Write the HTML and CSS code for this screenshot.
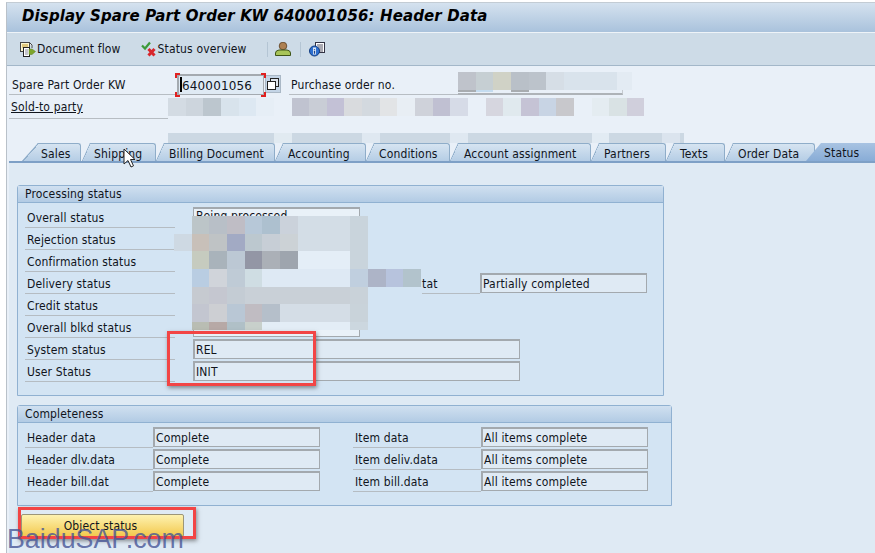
FILE: index.html
```html
<!DOCTYPE html>
<html lang="en">
<head>
<meta charset="utf-8">
<title>Display Spare Part Order</title>
<link rel="stylesheet" href="styles.css">
</head>
<body>
<div class="window">
  <h1 class="title">Display Spare Part Order KW 640001056: Header Data</h1>
  <div class="toolbar">
    <span class="tool">
      <svg class="ico" viewBox="0 0 17 15"><rect x="1.500" y=".5" width="9" height="9" fill="#fbf6cf" stroke="#444"/><path d="M3 3h6M3 5h6" stroke="#c49a2c"/><path d="M10.500 .5l2.500 2.500v3" fill="#fff" stroke="#444"/><rect x="4.500" y="5.500" width="6" height="9" fill="#fff" stroke="#222"/><path d="M6 8h3M6 10h3M6 12h3" stroke="#889"/><path d="M10 7h3l3.500 2.500-3.500 3h-3z" fill="#7da62c" stroke="#5c7d1c" stroke-width=".5"/></svg>
      Document flow
    </span>
    <span class="tool tool-status">
      <svg class="ico" viewBox="0 0 16 16"><path d="M1 4.500l3 3 5-6" fill="none" stroke="#3d9a3a" stroke-width="2.200"/><path d="M7.500 8l6 6.500M13.500 8l-6 6.500" stroke="#d8262c" stroke-width="3"/></svg>
      Status overview
    </span>
    <span class="sep"></span>
    <svg class="ico ico-user" viewBox="0 0 16 14"><circle cx="8" cy="4" r="3.800" fill="#ad8052" stroke="#5a3f22" stroke-width=".8"/><path d="M.5 13.500v-2.500q0-2.500 3.500-3h8q3.500 .500 3.500 3v2.500z" fill="#a8c458" stroke="#3f5518"/></svg>
    <span class="sep sep-b"></span>
    <svg class="ico ico-info" viewBox="0 0 16 15"><rect x="6.500" y=".5" width="9" height="10" fill="#fff" stroke="#334"/><path d="M8 3h6M9 5h5M9 7h5M9 9h5" stroke="#556"/><circle cx="5.500" cy="9" r="5" fill="#2c6fd0" stroke="#123c80"/><path d="M4 5.500h3v7H4z" fill="#dfeaf6"/><path d="M5.500 7v.8M5.500 8.800v3" stroke="#173f8a" stroke-width="1.300"/></svg>
  </div>

  <div class="head">
    <div class="head-row">
      <label class="lbl lbl-order">Spare Part Order KW</label>
      <span class="order-field"><span class="caret"></span>640001056</span>
      <span class="copy-btn"><svg viewBox="0 0 12 12" class="copy-ico"><rect x="3.500" y=".5" width="8" height="8" fill="#dfe6ee" stroke="#222"/><rect x=".5" y="3.500" width="8" height="8" fill="#fff" stroke="#222"/></svg></span>
      <label class="lbl lbl-po">Purchase order no.</label>
      <span class="po-field"></span>
    </div>
    <div class="head-row head-row-2">
      <label class="lbl lbl-sold"><u>Sold-to party</u></label>
    </div>
  </div>

  <div class="tabs">
    <span class="tab tab-first">Sales</span>
    <span class="tab t-ship">Shipping</span>
    <span class="tab t-bill">Billing Document</span>
    <span class="tab t-acc">Accounting</span>
    <span class="tab t-cond">Conditions</span>
    <span class="tab t-assign">Account assignment</span>
    <span class="tab t-part">Partners</span>
    <span class="tab t-text">Texts</span>
    <span class="tab t-order">Order Data</span>
    <span class="tab tab-active">Status</span>
  </div>

  <div class="panel">
    <section class="group group-proc">
      <h2 class="group-title">Processing status</h2>
      <div class="proc-grid">
        <span class="cap">Overall status</span>
        <span class="cap">Rejection status</span>
        <span class="cap">Confirmation status</span>
        <span class="cap">Delivery status</span>
        <span class="cap">Credit status</span>
        <span class="cap">Overall blkd status</span>
        <span class="cap cap-wide">System status</span>
        <span class="cap cap-wide">User Status</span>
        <div class="multi">Being processed</div>
        <span class="val val-long r7">REL</span>
        <span class="val val-long r8">INIT</span>
        <span class="cap cap-tat">tat</span>
        <span class="val val-part">Partially completed</span>
      </div>
    </section>

    <section class="group group-comp">
      <h2 class="group-title">Completeness</h2>
      <div class="comp-grid">
        <span class="cap">Header data</span><span class="val">Complete</span><span class="cap">Item data</span><span class="val">All items complete</span>
        <span class="cap">Header dlv.data</span><span class="val">Complete</span><span class="cap">Item deliv.data</span><span class="val">All items complete</span>
        <span class="cap">Header bill.dat</span><span class="val">Complete</span><span class="cap">Item bill.data</span><span class="val">All items complete</span>
      </div>
    </section>

    <button class="obj-btn" type="button">Object status</button>
  </div>

  <svg class="mosaic" width="875" height="553" viewBox="0 0 875 553">
    <g>
      <rect x="168" y="98" width="18" height="18" fill="#d3dbe3"/><rect x="186" y="98" width="17" height="18" fill="#cdd5dd"/><rect x="203" y="98" width="18" height="18" fill="#bcc6ce"/><rect x="221" y="98" width="18" height="18" fill="#d8e3ec"/><rect x="239" y="98" width="17" height="18" fill="#dde8f2"/><rect x="256" y="98" width="18" height="18" fill="#e6eef6"/>
      <rect x="292" y="98" width="17" height="18" fill="#c0c3d0"/><rect x="309" y="98" width="18" height="18" fill="#c9cdd6"/><rect x="327" y="98" width="17" height="18" fill="#c3c1d6"/><rect x="344" y="98" width="18" height="18" fill="#d9dbde"/><rect x="362" y="98" width="18" height="18" fill="#d3d9df"/><rect x="380" y="98" width="17" height="18" fill="#e2e4e6"/><rect x="397" y="98" width="18" height="18" fill="#e8eef4"/><rect x="415" y="98" width="18" height="18" fill="#cfd2da"/><rect x="433" y="98" width="17" height="18" fill="#c0c0d2"/><rect x="450" y="98" width="18" height="18" fill="#d6dbe7"/>
      <rect x="486" y="98" width="17" height="18" fill="#d6d6df"/><rect x="503" y="98" width="18" height="18" fill="#e0e9ee"/><rect x="521" y="98" width="18" height="18" fill="#c5c3d5"/><rect x="539" y="98" width="17" height="18" fill="#c8d4e4"/><rect x="556" y="98" width="18" height="18" fill="#c8c8cc"/><rect x="592" y="98" width="17" height="18" fill="#e4ecf1"/><rect x="609" y="98" width="18" height="18" fill="#d9e2e4"/><rect x="627" y="98" width="17" height="18" fill="#d0cfdc"/>
    </g>
    <g>
      <rect x="168" y="133" width="106" height="10" fill="#ccd8e3"/><rect x="274" y="133" width="18" height="10" fill="#e1eaf1"/><rect x="292" y="133" width="70" height="10" fill="#ccd8e3"/><rect x="362" y="133" width="18" height="10" fill="#dfe8f1"/><rect x="380" y="133" width="70" height="10" fill="#ccd8e3"/><rect x="450" y="133" width="18" height="10" fill="#dfe8f1"/><rect x="468" y="133" width="124" height="10" fill="#ccd8e3"/><rect x="592" y="133" width="17" height="10" fill="#e2ebf3"/><rect x="609" y="133" width="53" height="10" fill="#ccd8e3"/><rect x="662" y="133" width="18" height="10" fill="#dbe4ee"/><rect x="680" y="133" width="4" height="10" fill="#ccd8e3"/>
    </g>
    <g>
      <rect x="458" y="72" width="18" height="18" fill="#bfc3cb"/><rect x="476" y="72" width="17" height="18" fill="#c6cfd3"/><rect x="493" y="72" width="18" height="18" fill="#d0d2c6"/><rect x="511" y="72" width="18" height="18" fill="#b9c0c8"/><rect x="529" y="72" width="17" height="18" fill="#bcc3cb"/><rect x="546" y="72" width="18" height="18" fill="#d6dee6"/><rect x="564" y="72" width="53" height="18" fill="#d9e3ec"/><rect x="617" y="72" width="15" height="18" fill="#e3ebf3"/>
      <rect x="458" y="90" width="18" height="2" fill="#a8acb0"/><rect x="476" y="90" width="17" height="2" fill="#c4dcf0"/><rect x="511" y="90" width="18" height="2" fill="#a8acb0"/>
    </g>
    <g>
      <rect x="192" y="216" width="17" height="18" fill="#bcc5c8"/><rect x="209" y="216" width="18" height="18" fill="#b8bfc7"/><rect x="227" y="216" width="18" height="18" fill="#bfbdc5"/><rect x="245" y="216" width="17" height="18" fill="#b7c8d8"/><rect x="262" y="216" width="18" height="18" fill="#adc0cf"/><rect x="280" y="216" width="18" height="18" fill="#cbd2db"/><rect x="298" y="216" width="52" height="18" fill="#d3dde6"/><rect x="350" y="216" width="18" height="18" fill="#c9d4dc"/>
      <rect x="174" y="234" width="18" height="17" fill="#ced9e3"/><rect x="192" y="234" width="17" height="17" fill="#c8c0b9"/><rect x="209" y="234" width="18" height="17" fill="#bfc3c5"/><rect x="227" y="234" width="18" height="17" fill="#a2aac4"/><rect x="245" y="234" width="17" height="17" fill="#bcc8cf"/><rect x="262" y="234" width="18" height="17" fill="#c7ced6"/><rect x="280" y="234" width="18" height="17" fill="#ccd2d6"/><rect x="298" y="234" width="52" height="17" fill="#d3dde6"/><rect x="350" y="234" width="18" height="17" fill="#c9d4dc"/>
      <rect x="192" y="251" width="17" height="18" fill="#c6cbbf"/><rect x="209" y="251" width="18" height="18" fill="#a9b3bb"/><rect x="227" y="251" width="18" height="18" fill="#bcc8d4"/><rect x="245" y="251" width="17" height="18" fill="#9396a5"/><rect x="262" y="251" width="18" height="18" fill="#abb0b7"/><rect x="280" y="251" width="18" height="18" fill="#9ea5ae"/><rect x="298" y="251" width="52" height="18" fill="#e4eef7"/><rect x="350" y="251" width="18" height="18" fill="#c9d4dc"/>
      <rect x="192" y="269" width="17" height="18" fill="#b9cde2"/><rect x="209" y="269" width="18" height="18" fill="#d0d4da"/><rect x="227" y="269" width="18" height="18" fill="#bfcbd6"/><rect x="245" y="269" width="17" height="18" fill="#cfdde3"/><rect x="262" y="269" width="88" height="18" fill="#dee9f4"/><rect x="350" y="269" width="18" height="18" fill="#c0cfdf"/><rect x="368" y="269" width="18" height="18" fill="#adb4c7"/><rect x="386" y="269" width="17" height="18" fill="#b7c3dd"/><rect x="403" y="269" width="18" height="18" fill="#b2c3cc"/>
      <rect x="192" y="287" width="17" height="17" fill="#c6cad0"/><rect x="209" y="287" width="18" height="17" fill="#c5c7d0"/><rect x="227" y="287" width="18" height="17" fill="#c4ccd4"/><rect x="245" y="287" width="105" height="17" fill="#c9d0d7"/><rect x="350" y="287" width="18" height="17" fill="#c9d2d9"/>
      <rect x="192" y="304" width="17" height="18" fill="#c3c6d0"/><rect x="209" y="304" width="18" height="18" fill="#cdcfd3"/><rect x="227" y="304" width="18" height="18" fill="#b9c7d5"/><rect x="245" y="304" width="17" height="18" fill="#c0bcc2"/><rect x="262" y="304" width="18" height="18" fill="#b5bfca"/><rect x="280" y="304" width="70" height="18" fill="#d4dde6"/><rect x="350" y="304" width="18" height="18" fill="#c9d3da"/>
      <rect x="192" y="322" width="17" height="8" fill="#b9bdb3"/><rect x="209" y="322" width="18" height="8" fill="#b7a9a6"/><rect x="227" y="322" width="18" height="8" fill="#b0c0c7"/><rect x="245" y="322" width="17" height="8" fill="#c8d0cb"/><rect x="262" y="322" width="88" height="8" fill="#e3edf6"/><rect x="350" y="322" width="18" height="8" fill="#ccd7df"/>
    </g>
  </svg>

  <span class="corner c-tl"></span><span class="corner c-tr"></span><span class="corner c-bl"></span><span class="corner c-br"></span>
  <div class="mark mark-status"></div>
  <div class="mark mark-btn"></div>
  <div class="watermark">BaiduSAP.com</div>
  <svg class="cursor" viewBox="0 0 13 20" width="13" height="20"><path d="M1 1v15l4-3.500 3 6.500 2.500-1.200-3-6.300H12z" fill="#fff" stroke="#222"/></svg>
</div>
</body>
</html>
```

FILE: styles.css
```css
* { box-sizing: border-box; }
html, body { margin: 0; padding: 0; }
body {
  width: 875px;
  height: 553px;
  overflow: hidden;
  background: #fff;
  font-family: "DejaVu Sans Condensed", "DejaVu Sans", sans-serif;
  font-stretch: condensed;
  font-size: 12px;
  letter-spacing: .15px;
  color: #10141c;
}
.window {
  position: relative;
  margin-left: 6px;
  margin-top: 2px;
  width: 869px;
  height: 551px;
  background: #e9f0f8;
  border-left: 1px solid #b9c1c9;
  border-top: 1px solid #c3ccd4;
  overflow: hidden;
}
.title {
  margin: 0;
  height: 30px;
  padding: 0 0 0 15px;
  line-height: 26px;
  font-family: "DejaVu Sans", sans-serif;
  font-stretch: normal;
  font-size: 15px;
  font-weight: bold;
  font-style: italic;
  letter-spacing: .12px;
  color: #000;
  background: linear-gradient(#d5e2ef, #a9c2dc);
  border-bottom: 1px solid #eef3f8;
}
.toolbar {
  display: flex;
  align-items: center;
  height: 33px;
  padding: 0 0 0 12px;
  background: #cddbe7;
  border-bottom: 1px solid #a3b7c9;
}
.tool { display: flex; align-items: center; gap: 1px; }
.tool-status { margin-left: 20px; }
.ico { width: 17px; height: 15px; flex: none; }
.tool-status .ico { width: 16px; height: 16px; }
.sep { width: 1px; height: 15px; background: #b4c5d4; margin-left: 20px; }
.sep-b { margin-left: 9px; }
.ico-user { width: 16px; height: 14px; margin-left: 7px; }
.ico-info { width: 16px; height: 15px; margin-left: 8px; }

.head { height: 77px; padding-top: 7px; }
.head-row { display: flex; align-items: flex-start; height: 24px; }
.head-row-2 { height: 22px; }
.lbl {
  display: block;
  height: 22px;
  line-height: 24px;
  border-bottom: 1px solid #b7bdc3;
  color: #10141c;
}
.lbl-order { width: 166px; margin-left: 2px; padding-left: 3px; }
.lbl-po { width: 169px; margin-left: 8px; padding-left: 2px; }
.lbl-sold { width: 159px; margin-left: 2px; padding-left: 2px; line-height: 21px; }
.order-field {
  position: relative;
  width: 87px;
  height: 21px;
  margin-left: 2px;
  margin-top: 1px;
  padding-left: 3px;
  line-height: 20px;
  font-family: "DejaVu Sans", sans-serif;
  font-stretch: normal;
  font-size: 12px;
  background: #dfeaf4;
  border: 1px solid #a4aab0;
  border-width: 2px 1px 1px 2px;
}
.caret { position: absolute; left: 1px; top: 1px; width: 2px; height: 15px; background: #000; }
.copy-btn {
  display: flex;
  align-items: center;
  justify-content: center;
  width: 16px;
  height: 18px;
  margin-left: 1px;
  margin-top: 2px;
  background: #c3d4e6;
  border: 1px solid #aab8c6;
}
.copy-ico { width: 12px; height: 12px; }
.po-field {
  width: 165px;
  height: 22px;
  background: #e9f0f8;
  border-bottom: 2px solid #aeb3b8;
  border-right: 1px solid #c5cad0;
}

.tabs { display: flex; height: 18px; padding-left: 15px; }
.tab {
  position: relative;
  display: block;
  height: 18px;
  padding-left: 13px;
  line-height: 20px;
  white-space: nowrap;
  background: linear-gradient(#d6e4f1, #b5cde5);
  border-top: 1px solid #8fadc9;
  border-right: 1px solid #8fadc9;
  border-radius: 0 3px 0 0;
  clip-path: polygon(8px 0, 100% 0, 100% 100%, 0 100%);
}
.tab::before {
  content: "";
  position: absolute;
  left: 0;
  top: -1px;
  width: 8px;
  height: 18px;
  background: linear-gradient(to bottom right, transparent 45%, #8fadc9 45%, #8fadc9 55%, transparent 55%);
}
.tab-first { width: 59px; padding-left: 19px; clip-path: polygon(16px 0, 100% 0, 100% 100%, 0 100%); }
.tab-first::before { width: 16px; }
.t-ship { width: 74px; margin-left: 1px; padding-left: 12px; }
.t-bill { width: 119px; }
.t-acc { width: 91px; }
.t-cond { width: 84px; }
.t-assign { width: 141px; padding-left: 14px; }
.t-part { width: 75px; }
.t-text { width: 59px; padding-left: 14px; }
.t-order { width: 90px; padding-left: 13px; }
.tab-active {
  width: 69px;
  margin-left: -9px;
  padding-left: 18px;
  border: 0;
  border-radius: 0;
  background: linear-gradient(#a8c3e2, #88acd6);
  clip-path: polygon(15px 0, 100% 0, 100% 100%, 0 100%);
}
.tab-active::before { display: none; }

.panel {
  height: 400px;
  margin-left: 2px;
  padding: 22px 0 0 8px;
  background: #dfeaf4;
  border-top: 2px solid #7ea0c6;
}
.group {
  background: #d3e4f3;
  border: 1px solid #90b1d1;
  border-radius: 3px 3px 0 0;
}
.group-proc { width: 647px; height: 211px; }
.group-comp { width: 655px; height: 101px; margin-top: 9px; }
.group-title {
  margin: 0;
  height: 17px;
  padding-left: 7px;
  line-height: 16px;
  font-size: 12px;
  font-weight: normal;
  background: linear-gradient(#d0e0f0, #b2cbe4);
  border-bottom: 1px solid #90b1d1;
}
.cap {
  display: block;
  height: 21px;
  line-height: 22px;
  padding-left: 2px;
  border-bottom: 1px solid #b5bcc2;
}
.val {
  display: block;
  height: 20px;
  padding-left: 1px;
  line-height: 18px;
  background: #dfeaf4;
  border: 1px solid #a3a9ae;
  border-top-width: 2px;
  border-left-width: 2px;
}
.proc-grid {
  display: grid;
  margin: 4px 0 0 7px;
  grid-template-columns: 150px 18px 167px 62px 58px 167px;
  grid-template-rows: repeat(8, 22px);
  grid-auto-flow: column;
}
.proc-grid .cap { grid-column: 1; }
.proc-grid .cap-wide { grid-column: 1; }
.multi {
  grid-column: 3;
  grid-row: 1 / span 6;
  height: 130px;
  padding-left: 2px;
  line-height: 14px;
  background: #e9f1f8;
  border: 1px solid #a3a9ae;
  border-top-width: 2px;
}
.val-long { grid-column: 3 / span 4; width: 327px; }
.r7 { grid-row: 7; }
.r8 { grid-row: 8; }
.proc-grid .cap-tat { grid-column: 5; grid-row: 4; padding-left: 0; }
.val-part { grid-column: 6; grid-row: 4; }
.comp-grid {
  display: grid;
  margin: 4px 0 0 7px;
  grid-template-columns: 128px 167px 33px 128px 167px;
  grid-template-rows: repeat(3, 22px);
}
.comp-grid .cap:nth-child(4n+3) { grid-column: 4; }
.comp-grid .val:nth-child(4n) { grid-column: 5; }
.obj-btn {
  display: block;
  width: 163px;
  height: 23px;
  margin: 8px 0 0 4px;
  padding: 0 4px 0 0;
  font: inherit;
  letter-spacing: inherit;
  color: #10141c;
  background: linear-gradient(#fdf2b0, #f3c94e);
  border: 1px solid #9c9678;
  border-radius: 2px;
}

.mosaic { position: absolute; left: -7px; top: -3px; }
.corner { position: absolute; width: 5px; height: 5px; border: 0 solid #e02020; }
.c-tl { left: 168px; top: 70px; border-width: 2px 0 0 2px; }
.c-tr { left: 254px; top: 70px; border-width: 2px 2px 0 0; }
.c-bl { left: 168px; top: 89px; border-width: 0 0 2px 2px; }
.c-br { left: 254px; top: 89px; border-width: 0 2px 2px 0; }
.mark {
  position: absolute;
  border: 3px solid #f24545;
  box-shadow: 1px 2px 4px rgba(60, 60, 60, .55);
}
.mark-status { left: 160px; top: 328px; width: 149px; height: 55px; }
.mark-btn { left: 11px; top: 504px; width: 178px; height: 32px; }
.watermark {
  position: absolute;
  left: 0;
  top: 523px;
  font-family: "Liberation Sans", sans-serif;
  font-stretch: normal;
  font-size: 26.8px;
  letter-spacing: 0;
  line-height: 27px;
  color: rgba(70, 85, 150, .8);
  white-space: nowrap;
}
.cursor { position: absolute; left: 116px; top: 145px; }
```
